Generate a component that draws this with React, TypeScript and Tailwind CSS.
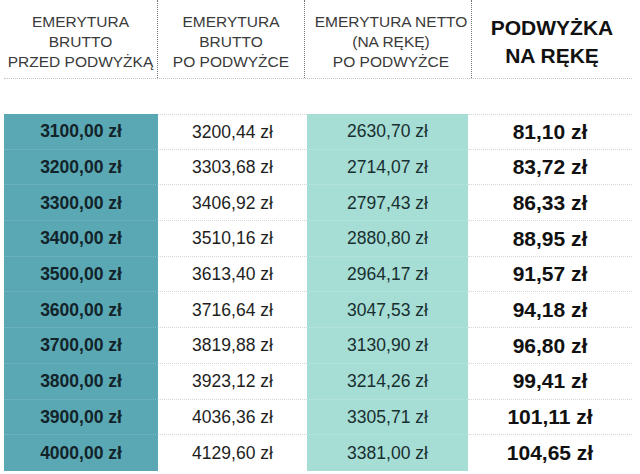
import React from 'react'

const rows = [
  ['3100,00 zł', '3200,44 zł', '2630,70 zł', '81,10 zł'],
  ['3200,00 zł', '3303,68 zł', '2714,07 zł', '83,72 zł'],
  ['3300,00 zł', '3406,92 zł', '2797,43 zł', '86,33 zł'],
  ['3400,00 zł', '3510,16 zł', '2880,80 zł', '88,95 zł'],
  ['3500,00 zł', '3613,40 zł', '2964,17 zł', '91,57 zł'],
  ['3600,00 zł', '3716,64 zł', '3047,53 zł', '94,18 zł'],
  ['3700,00 zł', '3819,88 zł', '3130,90 zł', '96,80 zł'],
  ['3800,00 zł', '3923,12 zł', '3214,26 zł', '99,41 zł'],
  ['3900,00 zł', '4036,36 zł', '3305,71 zł', '101,11 zł'],
  ['4000,00 zł', '4129,60 zł', '3381,00 zł', '104,65 zł'],
]

function App() {
  return (
    <div className="w-[640px] h-[474px] bg-white overflow-hidden font-['Liberation_Sans',Arial,sans-serif]">
      <div className="ml-[4px] w-[628px] grid grid-cols-[154px_147px_167px_160px] h-[79px] border-b border-dotted border-[#c4c4c4] text-[15.5px] leading-[20px] text-[#3a3a3a] text-center">
        <div className="flex items-center justify-center pt-[5px] border-r border-dotted border-[#777]">
          <span>EMERYTURA<br />BRUTTO<br />PRZED PODWYŻKĄ</span>
        </div>
        <div className="flex items-center justify-center pt-[5px] border-r border-dotted border-[#777]">
          <span>EMERYTURA<br />BRUTTO<br />PO PODWYŻCE</span>
        </div>
        <div className="flex items-center justify-center pt-[5px] pl-[6px] border-r border-dotted border-[#777]">
          <span>EMERYTURA NETTO<br />(NA RĘKĘ)<br />PO PODWYŻCE</span>
        </div>
        <div className="flex items-center justify-center pt-[5px] text-[21px] leading-[28px] font-bold text-[#111]">
          <span>PODWYŻKA<br />NA RĘKĘ</span>
        </div>
      </div>

      <div className="ml-[4px] mt-[35px] w-[628px] grid grid-cols-[154px_149px_161px_164px]">
        {rows.map((r, i) => (
          <React.Fragment key={i}>
            <div className={`h-[35.7px] flex items-center justify-center bg-[#5aa8b3] text-[17.5px] font-bold text-[#12232a] ${i < rows.length - 1 ? 'border-b border-dotted border-[#78b9c2]' : ''}`}>
              {r[0]}
            </div>
            <div className={`h-[35.7px] flex items-center justify-center text-[17.5px] text-[#1e1e1e] border-dotted border-[#d6d6d6] ${i === 0 ? 'border-t' : ''} ${i < rows.length - 1 ? 'border-b' : ''}`}>
              {r[1]}
            </div>
            <div className={`h-[35.7px] flex items-center justify-center bg-[#a6ddd5] text-[17.5px] text-[#182f2f] ${i < rows.length - 1 ? 'border-b border-dotted border-[#bde6e0]' : ''}`}>
              {r[2]}
            </div>
            <div className={`h-[35.7px] flex items-center justify-center text-[21px] font-bold text-[#111] border-dotted border-[#d6d6d6] ${i === 0 ? 'border-t' : ''} ${i < rows.length - 1 ? 'border-b' : ''}`}>
              {r[3]}
            </div>
          </React.Fragment>
        ))}
      </div>
    </div>
  )
}

export default App
